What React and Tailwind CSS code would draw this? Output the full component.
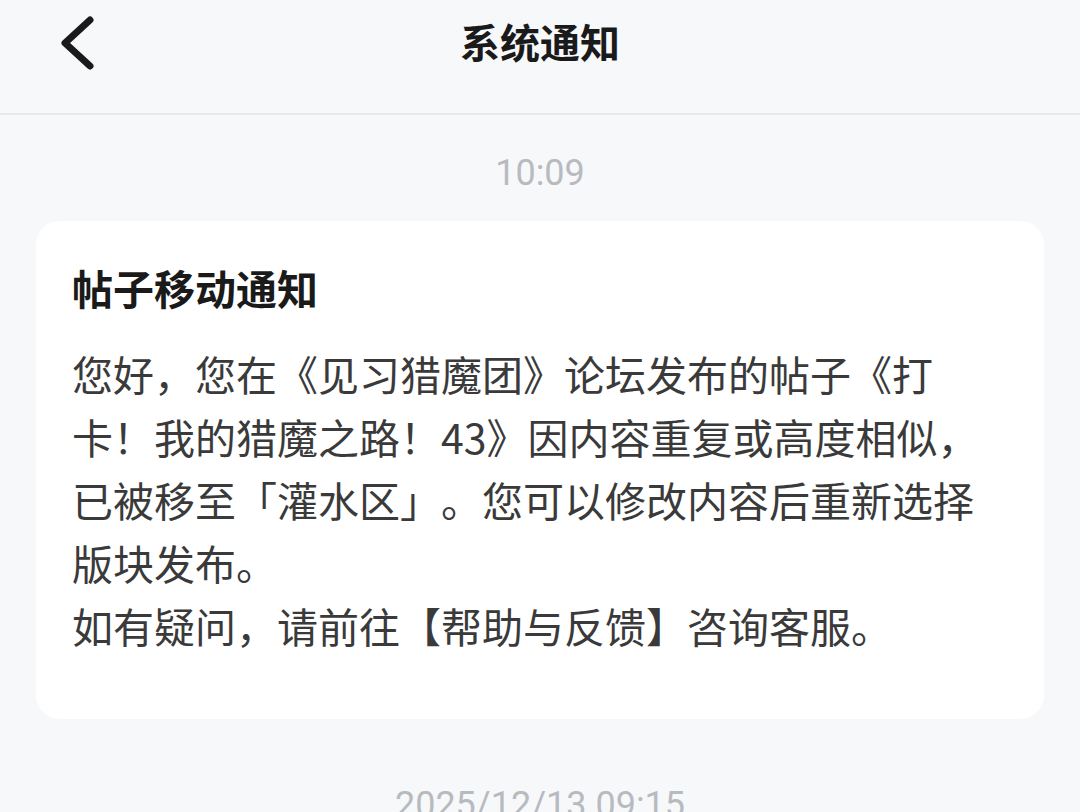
export default function App() {
  const cjk = { fontFamily: '"Noto Sans CJK SC", "Noto Sans", sans-serif' };
  const num = { fontFamily: 'Roboto, "Noto Sans", sans-serif' };
  return (
    <div className="min-h-screen w-[1080px] bg-[#f7f8fa] overflow-hidden [text-spacing-trim:space-all]" style={cjk}>
      <header className="h-[115px] border-b-2 border-[#e8e9ec] grid grid-cols-[1fr_auto_1fr] pt-[13px]">
        <div className="flex items-start pl-[58px] pt-[3px]">
          <svg width="40" height="54" viewBox="0 0 40 54" fill="none">
            <path d="M32 4 L7 27 L32 50" stroke="#1a1a1a" strokeWidth="7" strokeLinecap="round" strokeLinejoin="round" />
          </svg>
        </div>
        <h1 className="text-[40px] leading-[56px] font-bold text-[#1a1a1a]">系统通知</h1>
        <div />
      </header>

      <div className="mt-[34px] text-center text-[36px] leading-[48px] text-[#b7bbc0]" style={num}>10:09</div>

      <div className="mx-[36px] mt-[24px] bg-white rounded-[24px] px-[36px] pt-[38px] pb-[62px]">
        <h2 className="text-[41px] leading-[56px] font-bold text-[#1a1a1a]">帖子移动通知</h2>
        <p className="mt-[27px] text-[41px] leading-[63px] text-[#3a3a3a]">
          您好，您在《见习猎魔团》论坛发布的帖子《打卡！我的猎魔之路！43》因内容重复或高度相似，已被移至「灌水区」。您可以修改内容后重新选择<wbr />版块发布。
          <br />
          如有疑问，请前往【帮助与反馈】咨询客服。
        </p>
      </div>

      <div className="mt-[62px] text-center text-[36px] leading-[48px] text-[#b7bbc0]" style={num}>2025/12/13 09:15</div>
    </div>
  );
}
